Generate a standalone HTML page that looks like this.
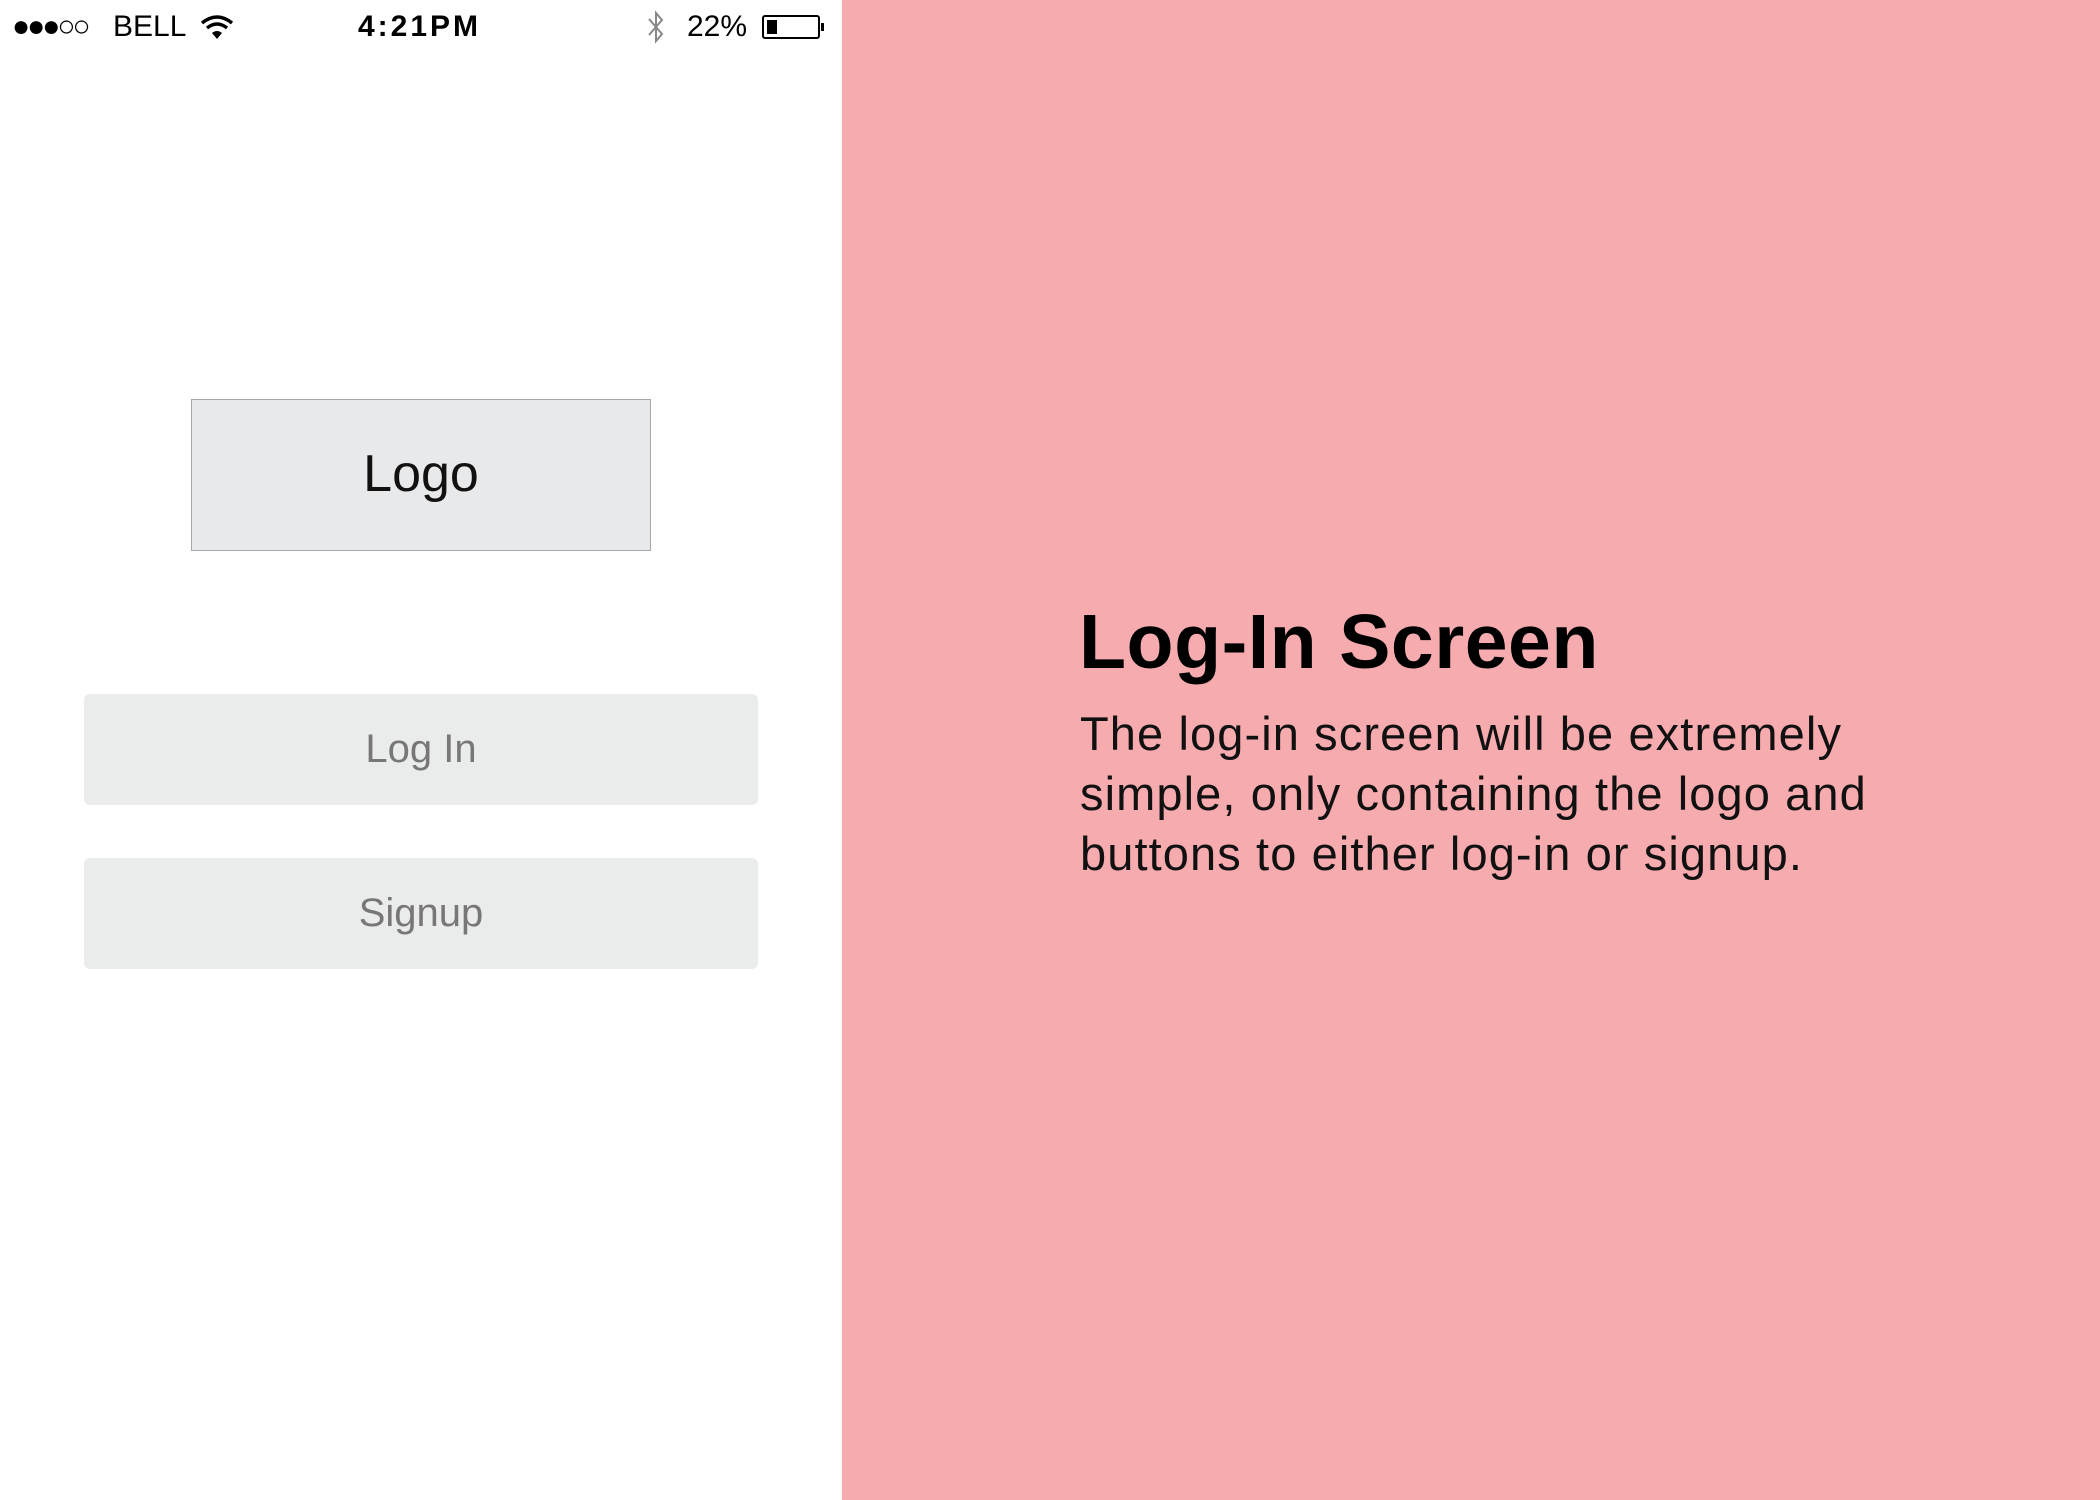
<!DOCTYPE html>
<html><head><style>
*{margin:0;padding:0;box-sizing:border-box}
body{width:2100px;height:1500px;position:relative;font-family:"Liberation Sans",sans-serif;background:#fff;overflow:hidden}
.pink{position:absolute;left:842px;top:0;width:1258px;height:1500px;background:#f6abaf}
.sb{position:absolute;top:8px;font-size:30px;color:#000;line-height:38px}
.box{position:absolute;left:191px;top:399px;width:460px;height:152px;background:#e8e9ea;border:1.5px solid #a6a6a6;font-size:52px;text-align:center;line-height:148px;color:#111}
.btn{position:absolute;left:84px;width:674px;height:111px;background:#eaebeb;border-radius:6px;font-size:40px;text-align:center;line-height:111px;color:#777}
h1{position:absolute;left:1079px;top:598px;font-size:77px;font-weight:bold;color:#000;letter-spacing:0.5px}
p{position:absolute;left:1080px;top:704px;font-size:47px;line-height:60px;color:#111;width:1000px;letter-spacing:1.1px}
</style></head><body>
<div class="sb" style="left:12px;letter-spacing:-3px">●●●<span style="letter-spacing:-3px">○○</span></div>
<div class="sb" style="left:113px">BELL</div>
<svg style="position:absolute;left:200px;top:14px" width="34" height="26" viewBox="0 0 34 26"><path d="M2 9 Q17 -3 32 9" stroke="#000" stroke-width="3.5" fill="none"/><path d="M7 14 Q17 6 27 14" stroke="#000" stroke-width="3.5" fill="none"/><path d="M12 19 L17 25 L22 19 Q17 15 12 19Z" fill="#000"/></svg>
<div class="sb" style="left:358px;font-weight:bold;letter-spacing:3px">4:21PM</div>
<svg style="position:absolute;left:646px;top:10px" width="20" height="34" viewBox="0 0 20 34"><path d="M3 9 L16 24 L10 31 L10 3 L16 10 L3 25" stroke="#888" stroke-width="2" fill="none"/></svg>
<div class="sb" style="left:687px">22%</div>
<div style="position:absolute;left:762px;top:15px;width:58px;height:24px;border:2px solid #000;border-radius:3px"><div style="position:absolute;left:3px;top:3px;width:10px;height:14px;background:#000"></div></div>
<div style="position:absolute;left:821px;top:23px;width:3px;height:8px;background:#000"></div>
<div class="pink"></div>
<div class="box">Logo</div>
<div class="btn" style="top:694px">Log In</div>
<div class="btn" style="top:858px">Signup</div>
<h1>Log-In Screen</h1>
<p>The log-in screen will be extremely<br>simple, only containing the logo and<br>buttons to either log-in or signup.</p>
</body></html>
